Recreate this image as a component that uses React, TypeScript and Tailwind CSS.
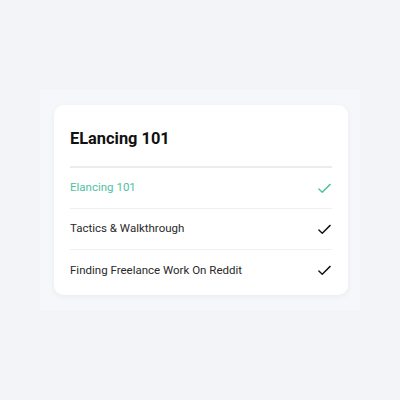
import React from "react";

const lessons = [
  { title: "Elancing 101", active: true },
  { title: "Tactics & Walkthrough", active: false },
  { title: "Finding Freelance Work On Reddit", active: false },
];

function Check({ className }: { className: string }) {
  return (
    <svg viewBox="0 0 16 16" className={className} fill="none" stroke="currentColor" strokeWidth="1.5" strokeLinecap="round" strokeLinejoin="round">
      <path d="M2 8.5l3.6 3.4L14 3.6" />
    </svg>
  );
}

export default function App() {
  return (
    <div className="h-[400px] w-[400px] bg-[#f3f4f8] pt-[90px] pl-[40px]" style={{ fontFamily: "Roboto, 'Noto Sans', sans-serif" }}>
      <div className="w-[320px] h-[220px] bg-[#f6f7fa] pt-[15px] pl-[14px]">
        <div className="w-[294px] h-[190px] rounded-[10px] bg-white shadow-[0_2px_6px_rgba(20,30,60,0.05)] px-4 pt-6">
          <h1 className="text-[16.4px] leading-[20px] font-bold text-[#111]">ELancing 101</h1>
          <div className="mt-[17px] h-[2px] bg-[#ececef]" />
          <ul>
            {lessons.map((l, i) => (
              <li
                key={l.title}
                className={`flex h-[41px] items-center justify-between ${i < lessons.length - 1 ? "border-b border-[#f0f0f2]" : ""}`}
              >
                <span className={`text-[11.5px] ${l.active ? "text-[#4fbf9f]" : "text-[#2a2a2a]"}`}>{l.title}</span>
                <Check className={`w-[15px] h-[15px] ${l.active ? "text-[#4fbf9f]" : "text-[#111]"}`} />
              </li>
            ))}
          </ul>
        </div>
      </div>
    </div>
  );
}
